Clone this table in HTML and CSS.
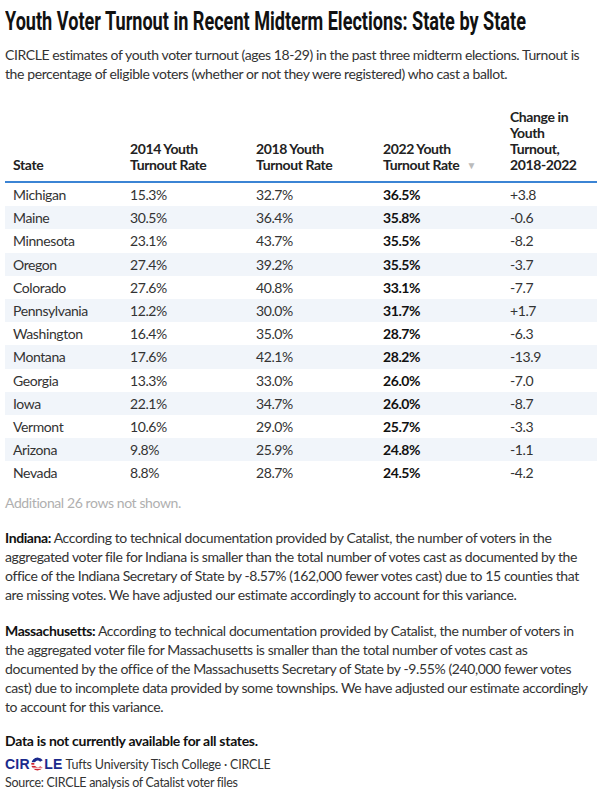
FILE: index.html
```html
<!DOCTYPE html>
<html>
<head>
<meta charset="utf-8">
<link rel="stylesheet" href="styles.css">
</head>
<body>
<div class="chart">
  <h1 class="title"><span class="title-text">Youth Voter Turnout in Recent Midterm Elections: State by State</span></h1>
  <p class="desc">CIRCLE estimates of youth voter turnout (ages 18-29) in the past three midterm elections. Turnout is<br>the percentage of eligible voters (whether or not they were registered) who cast a ballot.</p>
  <table class="tbl">
    <colgroup>
      <col class="c1"><col class="c2"><col class="c3"><col class="c4"><col class="c5">
    </colgroup>
    <thead>
      <tr>
        <th>State</th>
        <th>2014 Youth<br>Turnout Rate</th>
        <th>2018 Youth<br>Turnout Rate</th>
        <th>2022 Youth<br>Turnout Rate<span class="sort">&#9660;</span></th>
        <th>Change in Youth Turnout, 2018-2022</th>
      </tr>
    </thead>
    <tbody>
      <tr><td>Michigan</td><td>15.3%</td><td>32.7%</td><td class="b">36.5%</td><td>+3.8</td></tr>
      <tr><td>Maine</td><td>30.5%</td><td>36.4%</td><td class="b">35.8%</td><td>-0.6</td></tr>
      <tr><td>Minnesota</td><td>23.1%</td><td>43.7%</td><td class="b">35.5%</td><td>-8.2</td></tr>
      <tr><td>Oregon</td><td>27.4%</td><td>39.2%</td><td class="b">35.5%</td><td>-3.7</td></tr>
      <tr><td>Colorado</td><td>27.6%</td><td>40.8%</td><td class="b">33.1%</td><td>-7.7</td></tr>
      <tr><td>Pennsylvania</td><td>12.2%</td><td>30.0%</td><td class="b">31.7%</td><td>+1.7</td></tr>
      <tr><td>Washington</td><td>16.4%</td><td>35.0%</td><td class="b">28.7%</td><td>-6.3</td></tr>
      <tr><td>Montana</td><td>17.6%</td><td>42.1%</td><td class="b">28.2%</td><td>-13.9</td></tr>
      <tr><td>Georgia</td><td>13.3%</td><td>33.0%</td><td class="b">26.0%</td><td>-7.0</td></tr>
      <tr><td>Iowa</td><td>22.1%</td><td>34.7%</td><td class="b">26.0%</td><td>-8.7</td></tr>
      <tr><td>Vermont</td><td>10.6%</td><td>29.0%</td><td class="b">25.7%</td><td>-3.3</td></tr>
      <tr><td>Arizona</td><td>9.8%</td><td>25.9%</td><td class="b">24.8%</td><td>-1.1</td></tr>
      <tr><td>Nevada</td><td>8.8%</td><td>28.7%</td><td class="b">24.5%</td><td>-4.2</td></tr>
    </tbody>
  </table>
  <p class="more">Additional 26 rows not shown.</p>
  <p class="note first"><b>Indiana:</b> According to technical documentation provided by Catalist, the number of voters in the<br>aggregated voter file for Indiana is smaller than the total number of votes cast as documented by the<br>office of the Indiana Secretary of State by -8.57% (162,000 fewer votes cast) due to 15 counties that<br>are missing votes. We have adjusted our estimate accordingly to account for this variance.</p>
  <p class="note"><b>Massachusetts:</b> According to technical documentation provided by Catalist, the number of voters in<br>the aggregated voter file for Massachusetts is smaller than the total number of votes cast as<br>documented by the office of the Massachusetts Secretary of State by -9.55% (240,000 fewer votes<br>cast) due to incomplete data provided by some townships. We have adjusted our estimate accordingly<br>to account for this variance.</p>
  <p class="avail">Data is not currently available for all states.</p>
  <div class="byline">
    <span class="logo">CIR<svg class="flagc" viewBox="0 0 14 14" width="14" height="14" aria-hidden="true"><defs><clipPath id="cring"><path d="M12.8 3.2 A6.4 6.4 0 1 0 12.8 10.8 L10.1 9.3 A3.3 3.3 0 1 1 10.1 4.7 Z"/></clipPath></defs><g clip-path="url(#cring)"><rect x="0" y="0" width="14" height="14" fill="#fff"/><rect x="0" y="0" width="14" height="5.2" fill="#1b2a8c"/><rect x="0" y="6" width="14" height="1.7" fill="#d0202e"/><rect x="0" y="8.9" width="14" height="1.7" fill="#d0202e"/><rect x="0" y="11.8" width="14" height="2.2" fill="#d0202e"/></g></svg>LE</span>
    <span class="org">Tufts University Tisch College · CIRCLE</span>
  </div>
  <p class="source">Source: CIRCLE analysis of Catalist voter files</p>
</div>
</body>
</html>
```
FILE: styles.css
```css
html, body {
  margin: 0;
  padding: 0;
  background: #fff;
}
body {
  font-family: Lato, "Open Sans", "Liberation Sans", sans-serif;
  color: #333;
}
.chart {
  padding: 7px 5px 0 5px;
}
.title {
  margin: 0;
  width: 592px;
  overflow: hidden;
  white-space: nowrap;
  font-family: Roboto, "Liberation Sans", sans-serif;
  font-weight: 700;
  font-size: 25px;
  line-height: 30px;
  color: #111;
}
.title-text {
  display: inline-block;
  transform: scaleX(0.724);
  transform-origin: left center;
}
.desc {
  margin: 8px 0 0 0;
  font-size: 14px;
  line-height: 19px;
  letter-spacing: -0.4px;
  white-space: nowrap;
  color: #333;
}
.tbl {
  margin-top: 26px;
  width: 592px;
  border-collapse: collapse;
  table-layout: fixed;
  font-size: 14px;
  letter-spacing: -0.4px;
}
.c1 { width: 117px; }
.c2 { width: 126px; }
.c3 { width: 127px; }
.c4 { width: 127px; }
.c5 { width: 95px; }
.tbl th {
  text-align: left;
  vertical-align: bottom;
  font-weight: 700;
  font-size: 14px;
  line-height: 16px;
  color: #222;
  padding: 0 8px 8px 8px;
  border-bottom: 2px solid #3b84d4;
}
.sort {
  color: #bbb;
  font-size: 10px;
  margin-left: 7px;
  vertical-align: 1px;
}
.tbl td {
  height: 23.2px;
  padding: 0 8px;
  vertical-align: middle;
  color: #333;
  white-space: nowrap;
}
.tbl td.b {
  font-weight: 700;
  color: #111;
}
.tbl tbody tr:nth-child(even) td {
  background: #f1f5fa;
}
.more {
  margin: 10px 0 0 0;
  font-size: 14px;
  line-height: 18px;
  letter-spacing: -0.4px;
  color: #b0b0b0;
}
.note {
  margin: 17px 0 0 0;
  font-size: 14px;
  line-height: 19px;
  letter-spacing: -0.4px;
  white-space: nowrap;
  color: #333;
}
.note.first {
  margin-top: 16px;
}
.note b {
  color: #111;
}
.avail {
  margin: 15px 0 0 0;
  font-size: 14px;
  line-height: 19px;
  letter-spacing: -0.3px;
  font-weight: 700;
  color: #111;
}
.byline {
  display: flex;
  align-items: center;
  gap: 3px;
  margin-top: 4px;
  height: 20px;
}
.logo {
  display: inline-flex;
  align-items: center;
  font-family: "Liberation Sans", Arial, sans-serif;
  font-weight: 700;
  font-size: 14px;
  letter-spacing: 0.2px;
  color: #1b2a8c;
}
.flagc {
  margin: 0 0.5px 0 0;
}
.org {
  font-size: 12.5px;
  letter-spacing: -0.2px;
  color: #333;
}
.source {
  margin: 0;
  font-size: 12.5px;
  line-height: 18px;
  letter-spacing: -0.3px;
  color: #333;
}
```
